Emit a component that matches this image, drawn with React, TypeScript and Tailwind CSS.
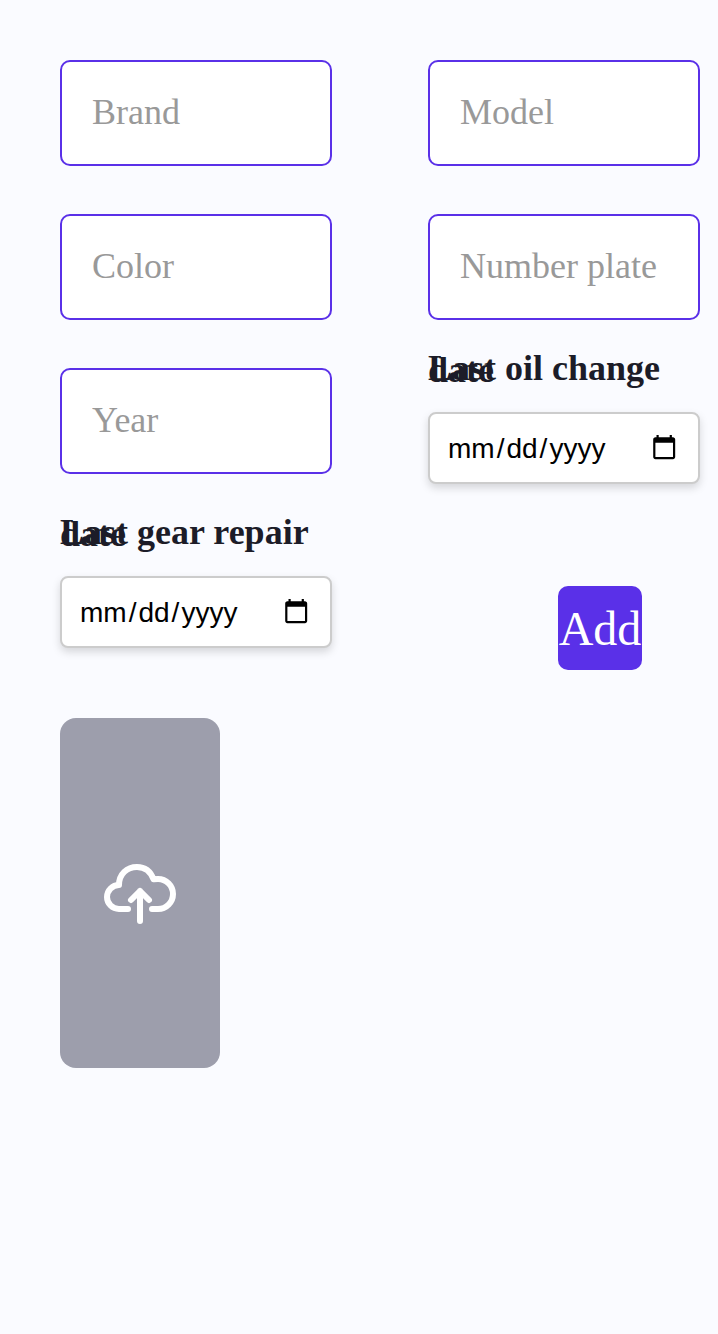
import React from "react";

function TextField({ label }: { label: string }) {
  return (
    <input
      type="text"
      aria-label={label}
      placeholder={label}
      className="block h-[106px] w-[272px] rounded-[10px] border-2 border-[#5a30e8] bg-white px-[30px] pb-[2px] text-[36px] leading-[42px] text-[#1c1c28] outline-none placeholder:text-[#999999]"
    />
  );
}

function CalendarIcon() {
  return (
    <svg viewBox="0 0 24 24" className="mb-[2px] h-[26.4px] w-[26.4px]" fill="#000">
      <path d="M20 3h-1V1h-2v2H7V1H5v2H4c-1.1 0-2 .9-2 2v16c0 1.1.9 2 2 2h16c1.1 0 2-.9 2-2V5c0-1.1-.9-2-2-2zm0 18H4V8h16v13z" />
    </svg>
  );
}

function DateField({ label }: { label: string }) {
  return (
    <div className="-mt-px flex flex-col">
      <div className="h-[4px] w-[272px] text-[36px] leading-[2px] font-bold text-[#1c1c28]">{label}</div>
      <div className="mt-[41px] flex h-[72px] w-[272px] items-center justify-between rounded-[8px] border-2 border-[#cccccc] bg-white pr-[20.6px] pl-[16px] shadow-[0_4px_8px_rgba(0,0,0,0.15)]">
        <div className="flex pt-[2px] font-['Liberation_Sans',Arial,sans-serif] text-[28px] leading-[32px] text-black">
          <span className="px-[2px]">mm</span>
          <span>/</span>
          <span className="px-[2px]">dd</span>
          <span>/</span>
          <span className="px-[2px]">yyyy</span>
        </div>
        <CalendarIcon />
      </div>
    </div>
  );
}

function CloudUploadIcon() {
  return (
    <svg
      viewBox="0 0 72 62"
      className="mt-[2px] h-[62px] w-[72px]"
      fill="none"
      stroke="#fff"
      strokeWidth="6"
      strokeLinecap="round"
      strokeLinejoin="round"
    >
      <path d="M24 46H15a12 12 0 0 1 0-24C15 11 23 4 33 4c7.500 0 13.500 4.200 16.500 12.300C51 16 52.500 16 54 16a15 15 0 0 1 0 30h-6" />
      <path d="M36 58V28M27 37l9-9 9 9" />
    </svg>
  );
}

export default function App() {
  return (
    <main className="flex h-[1334px] w-[718px] items-start gap-24 overflow-hidden bg-[#fafbff] pt-[60px] pl-[60px] font-['Liberation_Serif','Times_New_Roman',serif]">
      <section className="flex flex-col gap-12">
        <TextField label="Brand" />
        <TextField label="Color" />
        <TextField label="Year" />
        <div className="mt-[10px]">
          <DateField label="Last gear repair date" />
        </div>
        <button
          aria-label="Upload photo"
          className="mt-[22px] flex h-[350px] w-[160px] items-center justify-center rounded-[16px] bg-[#9d9eac]"
        >
          <CloudUploadIcon />
        </button>
      </section>
      <section className="flex flex-col gap-12">
        <TextField label="Model" />
        <TextField label="Number plate" />
        <DateField label="Last oil change date" />
        <button className="mt-[54px] ml-[130px] flex h-[84px] w-[84px] items-center justify-center rounded-[10px] bg-[#5a30e8] pt-[2px] text-[48px] leading-none text-white">
          Add
        </button>
      </section>
    </main>
  );
}
